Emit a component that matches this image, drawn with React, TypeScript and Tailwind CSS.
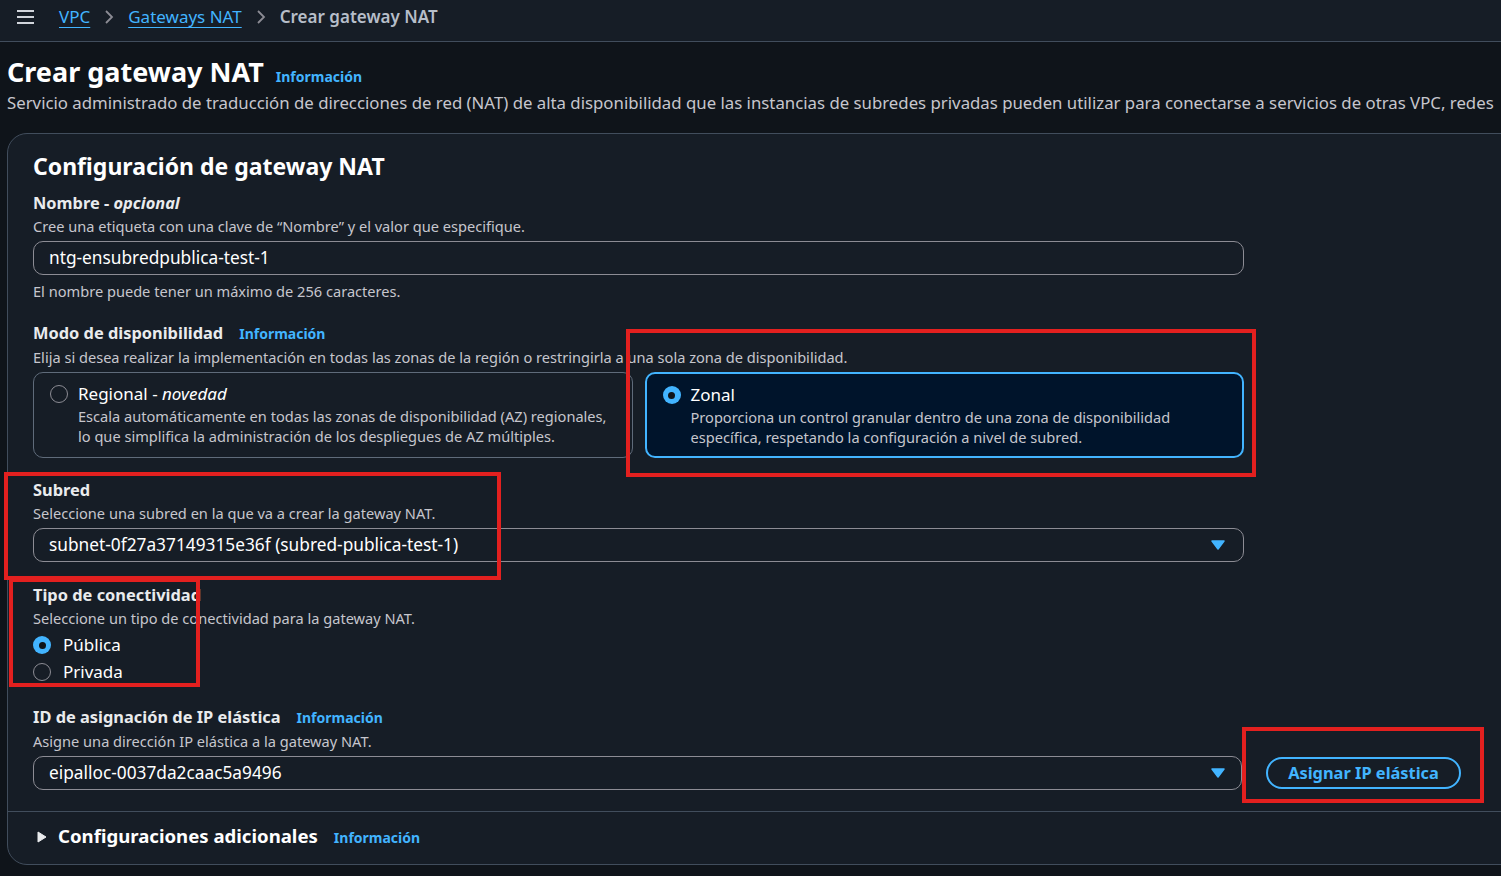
import { useState } from 'react'

const font = { fontFamily: '"Noto Sans", "Open Sans", sans-serif' }

function Info() {
  return <span className="ml-4 text-[14px] font-bold text-[#42b4ff]">Información</span>
}

function Caret() {
  return (
    <svg width="14" height="10" viewBox="0 0 14 10" className="shrink-0">
      <path d="M1 1h12L7 9z" fill="#42b4ff" stroke="#42b4ff" strokeLinejoin="round" strokeWidth="1.5" />
    </svg>
  )
}

function Radio({ checked }: { checked: boolean }) {
  return checked ? (
    <span className="flex h-[18px] w-[18px] shrink-0 items-center justify-center rounded-full bg-[#42b4ff]">
      <span className="block h-[7px] w-[7px] rounded-full bg-[#0f141a]" />
    </span>
  ) : (
    <span className="block h-[18px] w-[18px] shrink-0 rounded-full border-[1.5px] border-[#8c8c94]" />
  )
}

function RedBox({ className }: { className: string }) {
  return <div className={`pointer-events-none absolute border-[4px] border-[#e3201f] ${className}`} />
}

export default function App() {
  const [mode, setMode] = useState('zonal')
  const [conn, setConn] = useState('publica')

  return (
    <div style={font} className="relative h-[876px] w-[1501px] overflow-hidden bg-[#0f141a] text-[#e9ebed]">
      {/* breadcrumb bar */}
      <div className="flex h-[42px] items-start border-b border-[#414d5c] bg-[#161d26] pl-[16px] pt-[5px] text-[17px] leading-[24px]">
        <svg width="19" height="16" viewBox="0 0 19 16" className="mr-[24px] mt-[4px]">
          <path d="M1 2h17M1 8h17M1 14h17" stroke="#d1d5db" strokeWidth="2.2" />
        </svg>
        <a className="text-[#42b4ff] underline underline-offset-[4px]">VPC</a>
        <svg width="10" height="14" viewBox="0 0 10 14" className="mx-[14px] mt-[5px]">
          <path d="M2 1l6 6-6 6" fill="none" stroke="#8c8c94" strokeWidth="1.8" />
        </svg>
        <a className="text-[#42b4ff] underline underline-offset-[4px]">Gateways NAT</a>
        <svg width="10" height="14" viewBox="0 0 10 14" className="mx-[14px] mt-[5px]">
          <path d="M2 1l6 6-6 6" fill="none" stroke="#8c8c94" strokeWidth="1.8" />
        </svg>
        <span className="font-semibold text-[#b6bec9]">Crear gateway NAT</span>
      </div>

      {/* page header */}
      <div className="pl-[7px] pt-[12px]">
        <div className="flex items-baseline">
          <h1 className="text-[27px] font-bold leading-[36px] text-white">Crear gateway NAT</h1>
          <span className="ml-3 text-[14px] font-bold text-[#42b4ff]">Información</span>
        </div>
        <p className="mt-[1px] whitespace-nowrap text-[16.8px] leading-[24px] text-[#c6c6cd]">
          Servicio administrado de traducción de direcciones de red (NAT) de alta disponibilidad que las instancias de subredes privadas pueden utilizar para conectarse a servicios de otras VPC, redes
        </p>
      </div>

      {/* card */}
      <div className="ml-[7px] mt-[18px] w-[1540px] rounded-[20px] border border-[#414d5c] bg-[#161d26] pb-[12px]">
        <div className="pl-[25px] pt-[16px]">
          <h2 className="text-[23px] font-bold leading-[32px] text-white">Configuración de gateway NAT</h2>

          <div className="mt-[10px] text-[16.4px] font-bold leading-[22px]">
            Nombre - <i className="font-bold">opcional</i>
          </div>
          <div className="mt-[2px] text-[14.6px] leading-[20px] text-[#c6c6cd]">
            Cree una etiqueta con una clave de “Nombre” y el valor que especifique.
          </div>
          <div className="mt-[5px] flex h-[34px] w-[1211px] items-center rounded-[10px] border border-[#8c8c94] px-[15px] text-[17.3px] text-white">
            ntg-ensubredpublica-test-1
          </div>
          <div className="mt-[6px] text-[14.6px] leading-[20px] text-[#c6c6cd]">
            El nombre puede tener un máximo de 256 caracteres.
          </div>

          <div className="mt-[21px] flex items-baseline text-[16.4px] font-bold leading-[22px]">
            Modo de disponibilidad
            <Info />
          </div>
          <div className="mt-[2px] text-[14.6px] leading-[20px] text-[#c6c6cd]">
            Elija si desea realizar la implementación en todas las zonas de la región o restringirla a una sola zona de disponibilidad.
          </div>
          <div className="mt-[5px] grid w-[1211px] grid-cols-2 gap-[12px]">
            <button
              onClick={() => setMode('regional')}
              className={`flex h-[86px] gap-[10px] rounded-[10px] px-[16px] pt-[9px] text-left ${mode === 'regional' ? 'border-2 border-[#42b4ff] bg-[#00142b]' : 'border border-[#5f6b7a]'}`}
            >
              <span className="mt-[3px]"><Radio checked={mode === 'regional'} /></span>
              <span className="w-[534px]">
                <span className="block text-[17px] leading-[24px] text-white">
                  Regional - <i>novedad</i>
                </span>
                <span className="block text-[14.6px] leading-[20px] text-[#c6c6cd]">
                  Escala automáticamente en todas las zonas de disponibilidad (AZ) regionales, lo que simplifica la administración de los despliegues de AZ múltiples.
                </span>
              </span>
            </button>
            <button
              onClick={() => setMode('zonal')}
              className={`flex h-[86px] gap-[10px] rounded-[10px] px-[16px] pt-[9px] text-left ${mode === 'zonal' ? 'border-2 border-[#42b4ff] bg-[#00142b]' : 'border border-[#5f6b7a]'}`}
            >
              <span className="mt-[3px]"><Radio checked={mode === 'zonal'} /></span>
              <span>
                <span className="block text-[17px] leading-[24px] text-white">Zonal</span>
                <span className="block pr-[50px] text-[14.6px] leading-[20px] text-[#c6c6cd]">
                  Proporciona un control granular dentro de una zona de disponibilidad específica, respetando la configuración a nivel de subred.
                </span>
              </span>
            </button>
          </div>

          <div className="mt-[21px] text-[16.4px] font-bold leading-[22px]">Subred</div>
          <div className="mt-[2px] text-[14.6px] leading-[20px] text-[#c6c6cd]">
            Seleccione una subred en la que va a crear la gateway NAT.
          </div>
          <div className="mt-[5px] flex h-[34px] w-[1211px] items-center justify-between rounded-[10px] border border-[#8c8c94] pl-[15px] pr-[18px] text-[17.3px] text-white">
            subnet-0f27a37149315e36f (subred-publica-test-1)
            <Caret />
          </div>

          <div className="mt-[22px] text-[16.4px] font-bold leading-[22px]">Tipo de conectividad</div>
          <div className="mt-[2px] text-[14.6px] leading-[20px] text-[#c6c6cd]">
            Seleccione un tipo de conectividad para la gateway NAT.
          </div>
          <div className="mt-[5px] flex flex-col gap-[3px] text-[17px] leading-[24px] text-white">
            <button onClick={() => setConn('publica')} className="flex items-center gap-[12px]">
              <Radio checked={conn === 'publica'} />
              Pública
            </button>
            <button onClick={() => setConn('privada')} className="flex items-center gap-[12px]">
              <Radio checked={conn === 'privada'} />
              Privada
            </button>
          </div>

          <div className="mt-[22px] flex items-baseline text-[16.4px] font-bold leading-[22px]">
            ID de asignación de IP elástica
            <Info />
          </div>
          <div className="mt-[2px] text-[14.6px] leading-[20px] text-[#c6c6cd]">
            Asigne una dirección IP elástica a la gateway NAT.
          </div>
          <div className="mt-[5px] flex items-center gap-[24px]">
            <div className="flex h-[34px] w-[1209px] items-center justify-between rounded-[10px] border border-[#8c8c94] pl-[15px] pr-[16px] text-[17.3px] text-white">
              eipalloc-0037da2caac5a9496
              <Caret />
            </div>
            <button className="flex h-[32px] w-[195px] items-center justify-center rounded-full border-2 border-[#42b4ff] text-[16.4px] font-bold text-[#42b4ff]">
              Asignar IP elástica
            </button>
          </div>
        </div>

        <div className="mt-[21px] border-t border-[#414d5c]" />

        <div className="mt-[10px] flex items-baseline pl-[29px] text-[18.6px] font-bold leading-[28px] text-white">
          <svg width="10" height="12" viewBox="0 0 10 12" className="mr-[11px] self-center">
            <path d="M1 1l8 5-8 5z" fill="#e9ebed" stroke="#e9ebed" strokeLinejoin="round" />
          </svg>
          Configuraciones adicionales
          <Info />
        </div>
      </div>

      {/* annotation boxes */}
      <RedBox className="left-[626px] top-[329px] h-[148px] w-[630px]" />
      <RedBox className="left-[4px] top-[472px] h-[108px] w-[497px]" />
      <RedBox className="left-[9px] top-[578px] h-[109px] w-[191px]" />
      <RedBox className="left-[1242px] top-[727px] h-[76px] w-[242px]" />
    </div>
  )
}
